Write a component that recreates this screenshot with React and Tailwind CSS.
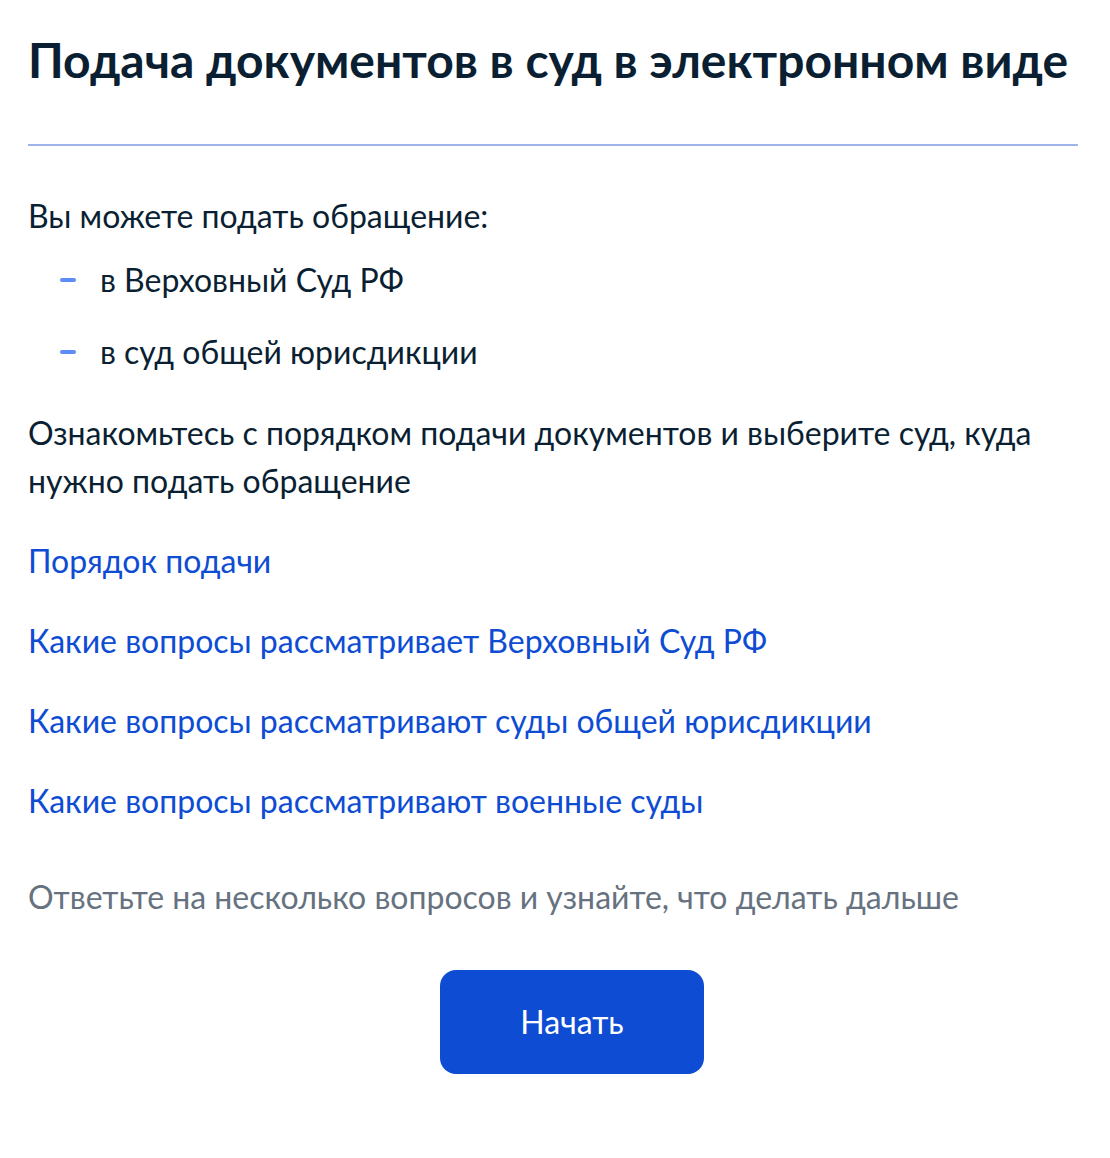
import React from "react";

export default function App() {
  const font = { fontFamily: "Lato, 'Noto Sans', sans-serif" };
  return (
    <div className="min-h-[1158px] w-[1110px] bg-white text-[#0b1f33]" style={font}>
      <div className="pl-[28px] pr-[32px] pt-[28px]">
        <h1 className="text-[48px] leading-[64px] font-bold tracking-[0px]">
          Подача документов в суд в электронном виде
        </h1>
        <div className="mt-[52px] h-[2px] bg-[#9db3ea]" />
        <p className="mt-[46px] text-[32px] leading-[48px]">Вы можете подать обращение:</p>
        <ul className="mt-[16px] flex flex-col gap-[24px]">
          <li className="flex items-center text-[32px] leading-[48px]">
            <span className="ml-[32px] mr-[24px] inline-block h-[4px] w-[16px] rounded-full bg-[#5e8df5]" />
            в Верховный Суд РФ
          </li>
          <li className="flex items-center text-[32px] leading-[48px]">
            <span className="ml-[32px] mr-[24px] inline-block h-[4px] w-[16px] rounded-full bg-[#5e8df5]" />
            в суд общей юрисдикции
          </li>
        </ul>
        <p className="mt-[33px] text-[32px] leading-[48px]">
          Ознакомьтесь с порядком подачи документов и выберите суд, куда нужно подать обращение
        </p>
        <div className="mt-[32px] flex flex-col gap-[32px] text-[32px] leading-[48px] text-[#0d4cd3]">
          <a href="#" className="self-start">Порядок подачи</a>
          <a href="#" className="self-start">Какие вопросы рассматривает Верховный Суд РФ</a>
          <a href="#" className="self-start">Какие вопросы рассматривают суды общей юрисдикции</a>
          <a href="#" className="self-start">Какие вопросы рассматривают военные суды</a>
        </div>
        <p className="mt-[48px] text-[32px] leading-[48px] text-[#66727f]">
          Ответьте на несколько вопросов и узнайте, что делать дальше
        </p>
        <button className="mt-[49px] ml-[412px] flex h-[104px] w-[264px] items-center justify-center rounded-[16px] bg-[#0d4cd3] text-[32px] leading-[48px] text-white">
          Начать
        </button>
      </div>
    </div>
  );
}
